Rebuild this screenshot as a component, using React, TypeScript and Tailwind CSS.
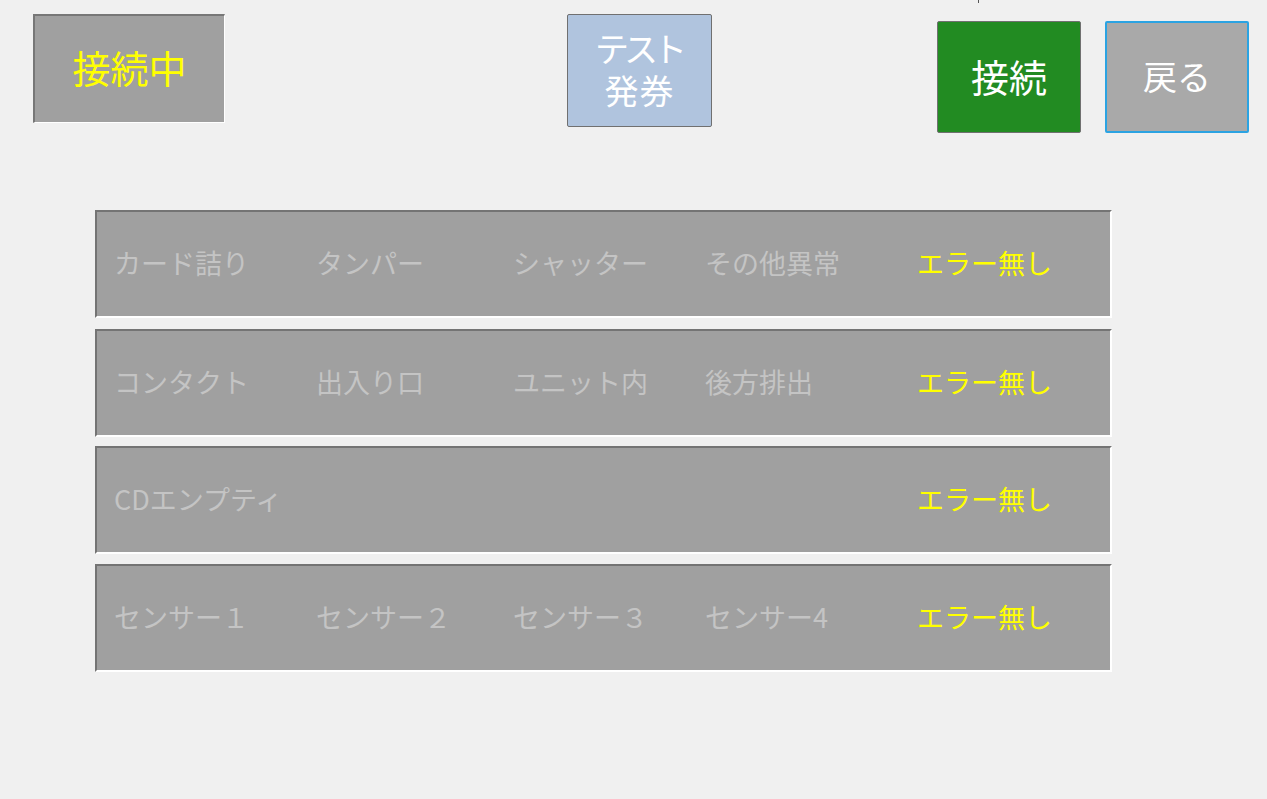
import React from "react";

const font = { fontFamily: '"Noto Sans CJK JP", "Noto Sans", sans-serif' };

const rows: { labels: string[] }[] = [
  { labels: ["カード詰り", "タンパー", "シャッター", "その他異常"] },
  { labels: ["コンタクト", "出入り口", "ユニット内", "後方排出"] },
  { labels: ["CDエンプティ", "", "", ""] },
  { labels: ["センサー１", "センサー２", "センサー３", "センサー4"] },
];

const colW = ["w-[202px]", "w-[197px]", "w-[192px]", "w-[212px]"];
const rowMt = ["mt-[77px]", "mt-[11px]", "mt-[9px]", "mt-[10px]"];

export default function App() {
  return (
    <div className="relative w-[1267px] h-[799px] bg-[#f0f0f0] overflow-hidden" style={font}>
      <span className="absolute left-[978px] top-0 w-px h-[3px] bg-[#555]" />
      <div className="flex items-start pl-[33px] pt-[14px]">
        <div className="w-[192px] h-[109px] bg-[#a0a0a0] border-t-2 border-l-2 border-b border-r border-t-[#777] border-l-[#777] border-b-white border-r-white flex items-center justify-center text-[38px] text-[#ffff00] leading-none pb-[4px]">
          接続中
        </div>
        <div className="ml-[342px] w-[145px] h-[113px] bg-[#b0c4de] border border-[#707070] rounded-[2px] flex flex-col items-center justify-center text-white text-[34px] leading-[42px] pb-[3px]">
          <span className="tracking-[-5px] pr-[2px]">テスト</span>
          <span className="tracking-[1px]">発券</span>
        </div>
        <div className="ml-[225px] mt-[7px] w-[144px] h-[112px] bg-[#228b22] border border-[#707070] rounded-[2px] flex items-center justify-center text-white text-[38px] leading-none pb-[3px]">
          接続
        </div>
        <div className="ml-[24px] mt-[7px] w-[144px] h-[112px] bg-[#a9a9a9] border-2 border-[#2ba3e2] rounded-[2px] flex items-center justify-center text-white text-[34px] leading-none pb-[2px]">
          戻る
        </div>
      </div>
      <div className="flex flex-col pl-[95px]">
        {rows.map((r, i) => (
          <div
            key={i}
            className={`${rowMt[i]} w-[1017px] h-[108px] bg-[#a0a0a0] border-t-2 border-l-2 border-b-2 border-r-2 border-t-[#747474] border-l-[#747474] border-b-white border-r-white flex items-center pl-[17px] pb-[4px]`}
          >
            {r.labels.map((l, j) => (
              <div key={j} className={`${colW[j]} shrink-0 text-[27px] text-[#c4c4c4] leading-none whitespace-nowrap`}>
                {l}
              </div>
            ))}
            <div className="text-[27px] text-[#ffff00] leading-none whitespace-nowrap">エラー無し</div>
          </div>
        ))}
      </div>
    </div>
  );
}
